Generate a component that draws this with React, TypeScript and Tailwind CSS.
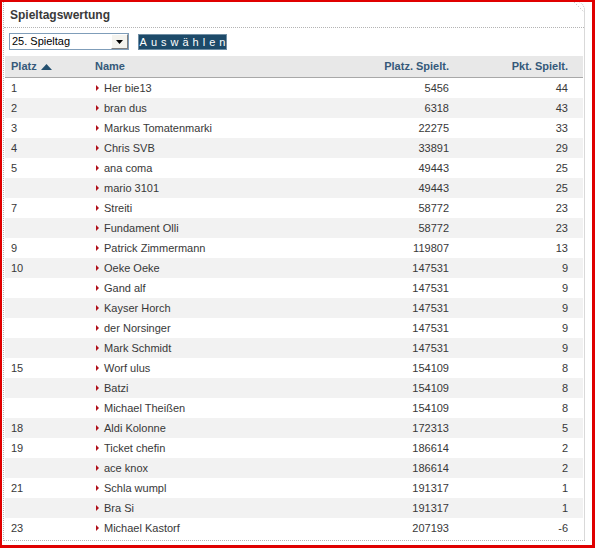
import React from "react";

type Row = [string, string, string, string];

const rows: Row[] = [
  ["1", "Her bie13", "5456", "44"],
  ["2", "bran dus", "6318", "43"],
  ["3", "Markus Tomatenmarki", "22275", "33"],
  ["4", "Chris SVB", "33891", "29"],
  ["5", "ana coma", "49443", "25"],
  ["", "mario 3101", "49443", "25"],
  ["7", "Streiti", "58772", "23"],
  ["", "Fundament Olli", "58772", "23"],
  ["9", "Patrick Zimmermann", "119807", "13"],
  ["10", "Oeke Oeke", "147531", "9"],
  ["", "Gand alf", "147531", "9"],
  ["", "Kayser Horch", "147531", "9"],
  ["", "der Norsinger", "147531", "9"],
  ["", "Mark Schmidt", "147531", "9"],
  ["15", "Worf ulus", "154109", "8"],
  ["", "Batzi", "154109", "8"],
  ["", "Michael Theißen", "154109", "8"],
  ["18", "Aldi Kolonne", "172313", "5"],
  ["19", "Ticket chefin", "186614", "2"],
  ["", "ace knox", "186614", "2"],
  ["21", "Schla wumpl", "191317", "1"],
  ["", "Bra Si", "191317", "1"],
  ["23", "Michael Kastorf", "207193", "-6"],
];

export default function App() {
  return (
    <div
      className="w-[595px] h-[548px] bg-white border-solid border-[#e00000] border-t-2 border-l-2 border-r-[3px] border-b-[3px] text-[11px] text-[#383838]"
      style={{ fontFamily: '"Liberation Sans", Arial, sans-serif' }}
    >
      <div className="relative ml-[1px] w-[582px] h-[539px] border-l border-r border-b border-dotted border-[#b4b4b4] rounded-tr-[8px]">
        <svg className="absolute -right-[1px] -top-[1px]" width="12" height="12" viewBox="0 0 12 12">
          <line x1="1" y1="1" x2="10.5" y2="10.5" stroke="#b4b4b4" strokeWidth="1" strokeDasharray="1 2" />
        </svg>
        <div className="h-[25px] flex items-center pl-[6px] text-[12px] font-bold text-[#3a3a3a]">
          Spieltagswertung
        </div>
        <div className="border-b border-dotted border-[#b4b4b4]" />
        <div className="mt-[5px] h-[17px] pl-[5px] flex items-start">
          <div className="w-[120px] h-[17px] border border-[#7f9db9] bg-white flex items-center justify-between">
            <span className="pl-[2px] text-[11px] text-[#000]">25. Spieltag</span>
            <div className="w-[17px] h-[15px] bg-[#f4f3ee] border-l border-t border-white border-r border-b border-r-[#808080] border-b-[#808080] flex items-center justify-center">
              <svg width="7" height="4" viewBox="0 0 7 4">
                <polygon points="0,0 7,0 3.5,4" fill="#000" />
              </svg>
            </div>
          </div>
          <div className="ml-[9px] mt-[1px] w-[89px] h-[16px] bg-[#1d4a69] border border-[#6f8ea4] flex items-center justify-center text-white text-[11px] tracking-[4px] pl-[4px]">
            Auswählen
          </div>
        </div>
        <div className="mt-[6px] mx-[1px]">
          <div className="grid grid-cols-[86px_1fr_119px_134px] h-[22px] bg-[#e8e8e8] border-b border-[#a8a8a8] items-center font-bold text-[#35597a]">
            <div className="pl-[6px] flex items-center gap-[4px]">
              Platz
              <svg width="11" height="6" viewBox="0 0 11 6">
                <polygon points="0,6 11,6 5.5,0" fill="#24506f" />
              </svg>
            </div>
            <div className="pl-[4px]">Name</div>
            <div className="text-right">Platz. Spielt.</div>
            <div className="text-right pr-[15px]">Pkt. Spielt.</div>
          </div>
          {rows.map((r, i) => (
            <div
              key={i}
              className={
                "grid grid-cols-[86px_1fr_119px_134px] h-[20px] items-center " +
                (i % 2 === 1 ? "bg-[#f2f2f2]" : "bg-white")
              }
            >
              <div className="pl-[6px]">{r[0]}</div>
              <div className="pl-[5px] flex items-center">
                <svg width="3" height="6" viewBox="0 0 3 6" className="mr-[6px]">
                  <polygon points="0,0 3,3 0,6" fill="#b0101a" />
                </svg>
                <span className="-ml-[1px]">{r[1]}</span>
              </div>
              <div className="text-right">{r[2]}</div>
              <div className="text-right pr-[15px]">{r[3]}</div>
            </div>
          ))}
        </div>
      </div>
    </div>
  );
}
